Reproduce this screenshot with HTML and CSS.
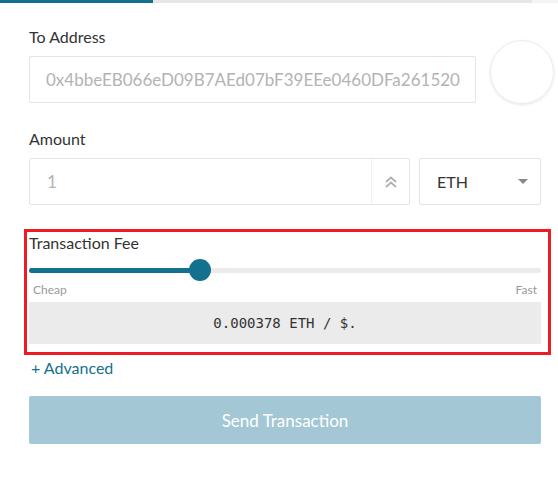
FILE: index.html
```html
<!DOCTYPE html>
<html>
<head>
<meta charset="utf-8">
<link rel="stylesheet" href="styles.css">
</head>
<body>
<div class="progress"><div class="p-done"></div><div class="p-mid"></div><div class="p-rest"></div></div>
<div class="form">
  <div class="label first">To Address</div>
  <div class="addr-row">
    <div class="input addr">0x4bbeEB066eD09B7AEd07bF39EEe0460DFa261520</div>
    <div class="avatar"></div>
  </div>
  <div class="label">Amount</div>
  <div class="amount-row">
    <div class="input amount">
      <span class="amount-val">1</span>
      <span class="chev">
        <svg width="14" height="14" viewBox="0 0 14 14"><path d="M2 7 L7 2.5 L12 7 M2 12 L7 7.5 L12 12" fill="none" stroke="#b0b0b0" stroke-width="1.8"/></svg>
      </span>
    </div>
    <div class="input select">
      <span>ETH</span>
      <span class="caret"></span>
    </div>
  </div>
  <div class="highlight">
    <div class="fee-label">Transaction Fee</div>
    <div class="slider">
      <div class="track"><div class="fill"></div></div>
      <div class="thumb"></div>
    </div>
    <div class="ends"><span>Cheap</span><span>Fast</span></div>
    <div class="fee-box">0.000378 ETH / $.</div>
  </div>
  <div class="advanced">+ Advanced</div>
  <div class="btn">Send Transaction</div>
</div>
</body>
</html>
```
FILE: styles.css
```css
* { box-sizing: border-box; }
body {
  margin: 0;
  font-family: Lato, "Liberation Sans", sans-serif;
  color: #333;
  background: #fff;
  overflow: hidden;
}
.progress { display: flex; height: 3px; }
.p-done { width: 153px; background: #13708f; }
.p-mid { width: 379px; background: #e6e6e6; }
.p-rest { flex: 1; background: #f5f5f5; }
.form { padding: 0 17px 0 29px; }
.label {
  font-size: 16px;
  line-height: 20px;
  margin-top: 25px;
  margin-bottom: 9px;
}
.label.first { margin-top: 24px; }
.addr-row { display: flex; align-items: flex-start; }
.input {
  border: 1px solid #e0e5ec;
  border-radius: 2px;
  height: 47px;
  display: flex;
  align-items: center;
  font-size: 17px;
  background: #fff;
}
.addr {
  width: 447px;
  flex: none;
  padding-left: 16px;
  color: #b3b3b3;
}
.avatar {
  width: 64px;
  height: 64px;
  border-radius: 50%;
  margin-left: 14px;
  margin-top: -16px;
  border: 1px solid #ececec;
  box-shadow: 0 1px 3px rgba(0,0,0,0.10);
  flex: none;
}
.amount-row { display: flex; gap: 9px; }
.amount { width: 381px; flex: none; justify-content: space-between; }
.amount-val { padding-left: 17px; color: #b3b3b3; }
.chev {
  width: 38px;
  height: 100%;
  border-left: 1px solid #eef0f3;
  display: flex;
  align-items: center;
  justify-content: center;
}
.select {
  flex: 1;
  justify-content: space-between;
  padding: 0 12px 0 17px;
  color: #333;
  font-size: 16px;
}
.caret {
  width: 0; height: 0;
  border-left: 5px solid transparent;
  border-right: 5px solid transparent;
  border-top: 5px solid #888;
}
.highlight {
  margin: 24px -10px 0 -5px;
  border: 3px solid #ed1c24;
  padding: 2px 7px 8px 2px;
}
.fee-label { font-size: 16px; line-height: 17px; }
.slider { position: relative; height: 22px; margin-top: 8px; }
.track {
  position: absolute; left: 0; right: 0; top: 9px;
  height: 5px; border-radius: 3px; background: #ebebeb;
}
.fill { width: 171px; height: 100%; background: #13708f; border-radius: 3px; }
.thumb {
  position: absolute; left: 160px; top: 0;
  width: 22px; height: 22px; border-radius: 50%;
  background: #13708f;
}
.ends {
  display: flex; justify-content: space-between;
  font-size: 12px; color: #999;
  padding: 0 4px;
  line-height: 14px;
  margin-top: 2px;
}
.fee-box {
  margin-top: 5px;
  height: 42px;
  background: #ebebeb;
  display: flex; align-items: center; justify-content: center;
  font-family: "DejaVu Sans Mono", "Liberation Mono", monospace;
  font-size: 14px;
  color: #333;
}
.advanced {
  color: #13708f;
  font-size: 16px;
  line-height: 17px;
  margin-top: 4px;
  padding-left: 2px;
}
.btn {
  margin-top: 20px;
  height: 48px;
  background: #a3c7d4;
  border-radius: 2px;
  color: #fff;
  font-size: 17px;
  display: flex; align-items: center; justify-content: center;
}
```
